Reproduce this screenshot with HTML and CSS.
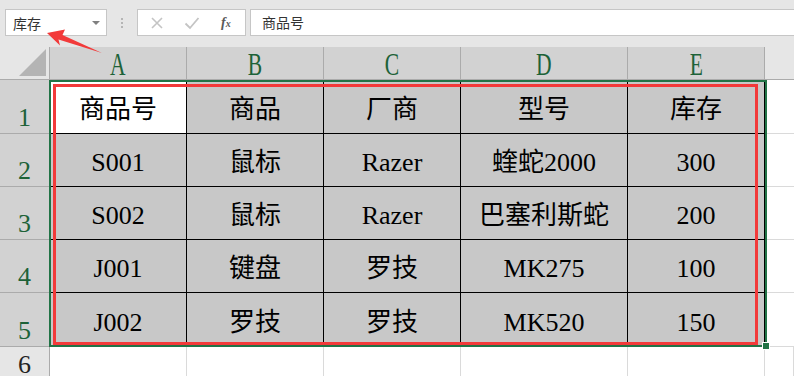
FILE: index.html
```html
<!DOCTYPE html>
<html lang="zh-CN">
<head>
	<meta charset="UTF-8">
	<title>库存表</title>
	<link rel="stylesheet" href="styles.css">
</head>
<body>

	<div class="toolbar">
		<div class="namebox">
			<span>库存</span>
			<span class="caret"></span>
		</div>
		<div class="grip"><i></i><i></i><i></i></div>
		<div class="tools">
			<svg class="tool" width="14" height="14" viewBox="0 0 14 14"><path d="M2 2 L12 12 M12 2 L2 12" stroke="#c4c4c4" stroke-width="1.6" fill="none"/></svg>
			<svg class="tool" width="16" height="14" viewBox="0 0 16 14"><path d="M1.5 7.5 L6 12 L14.5 2" stroke="#c4c4c4" stroke-width="1.8" fill="none"/></svg>
			<span class="fx">f<small>x</small></span>
		</div>
		<div class="formula">商品号</div>
	</div>

	<div class="sheet">
		<div class="grid">
			<div class="corner"><span class="tri"></span></div>
			<div class="colhead"><span>A</span></div>
			<div class="colhead"><span>B</span></div>
			<div class="colhead"><span>C</span></div>
			<div class="colhead"><span>D</span></div>
			<div class="colhead"><span>E</span></div>
			<div class="colhead blank"></div>

			<div class="rowhead">1</div>
			<div class="cell active">商品号</div>
			<div class="cell">商品</div>
			<div class="cell">厂商</div>
			<div class="cell">型号</div>
			<div class="cell">库存</div>
			<div class="empty"></div>

			<div class="rowhead">2</div>
			<div class="cell">S001</div>
			<div class="cell">鼠标</div>
			<div class="cell">Razer</div>
			<div class="cell">蝰蛇2000</div>
			<div class="cell">300</div>
			<div class="empty"></div>

			<div class="rowhead">3</div>
			<div class="cell">S002</div>
			<div class="cell">鼠标</div>
			<div class="cell">Razer</div>
			<div class="cell">巴塞利斯蛇</div>
			<div class="cell">200</div>
			<div class="empty"></div>

			<div class="rowhead">4</div>
			<div class="cell">J001</div>
			<div class="cell">键盘</div>
			<div class="cell">罗技</div>
			<div class="cell">MK275</div>
			<div class="cell">100</div>
			<div class="empty"></div>

			<div class="rowhead">5</div>
			<div class="cell">J002</div>
			<div class="cell">罗技</div>
			<div class="cell">罗技</div>
			<div class="cell">MK520</div>
			<div class="cell">150</div>
			<div class="empty"></div>

			<div class="rowhead plain">6</div>
			<div class="empty last"></div>
			<div class="empty last"></div>
			<div class="empty last"></div>
			<div class="empty last"></div>
			<div class="empty last"></div>
			<div class="empty last"></div>
		</div>

		<div class="selection"><span class="handle"></span></div>
		<div class="mark"></div>
	</div>

	<!-- annotation arrow pointing at the name box -->
	<svg class="arrow" width="110" height="60" viewBox="0 0 110 60">
		<polygon points="47,33 65,29.5 62.5,35 102,53 58.5,39.5 60,45.5" fill="#f23a3a"/>
	</svg>

</body>
</html>
```

FILE: styles.css
```css
*{
	box-sizing: border-box;
}
body{
	margin: 0;
	width: 794px;
	height: 376px;
	overflow: hidden;
	background: #fff;
	font-family: "Liberation Serif", "Noto Sans CJK SC", serif;
	position: relative;
}

/* ---- top bar ---- */
.toolbar{
	height: 47px;
	background: #e6e6e6;
	display: flex;
	align-items: flex-start;
	padding: 9px 0 0 5px;
}
.namebox{
	width: 102px;
	height: 27px;
	background: #fff;
	border: 1px solid #c6c6c6;
	display: flex;
	align-items: center;
	justify-content: space-between;
	padding: 0 6px 0 7px;
	font-family: "Noto Sans CJK SC", sans-serif;
	font-size: 14px;
	color: #333;
}
.caret{
	width: 0;
	height: 0;
	border-left: 4px solid transparent;
	border-right: 4px solid transparent;
	border-top: 4px solid #808080;
	margin-top: 1px;
}
.grip{
	width: 30px;
	height: 27px;
	display: flex;
	flex-direction: column;
	align-items: center;
	justify-content: center;
	gap: 2px;
}
.grip i{
	width: 2px;
	height: 2px;
	background: #b5b5b5;
}
.tools{
	width: 109px;
	height: 27px;
	background: #fff;
	border: 1px solid #c6c6c6;
	display: flex;
	align-items: center;
	padding-left: 12px;
	gap: 20px;
}
.fx{
	font-family: "Liberation Serif", serif;
	font-style: italic;
	font-weight: bold;
	font-size: 14px;
	color: #5a5a5a;
	margin-left: 1px;
}
.fx small{
	font-size: 10px;
}
.formula{
	flex: 1;
	height: 27px;
	margin-left: 4px;
	background: #fff;
	border: 1px solid #c6c6c6;
	border-right: none;
	padding-left: 11px;
	font-family: "Noto Sans CJK SC", sans-serif;
	font-size: 14px;
	line-height: 25px;
	color: #333;
}

/* ---- sheet ---- */
.sheet{
	position: relative;
}
.grid{
	display: grid;
	grid-template-columns: 50px 137px 137px 137px 167px 137px 1fr;
	grid-template-rows: 33px 54px 53px 53px 53px 54px 29px;
}
.corner{
	background: #e6e6e6;
	border-right: 1px solid #ababab;
	border-bottom: 1px solid #ababab;
	position: relative;
}
.tri{
	position: absolute;
	right: 3px;
	bottom: 3px;
	width: 0;
	height: 0;
	border-left: 27px solid transparent;
	border-bottom: 27px solid #b4b4b4;
}
.colhead{
	background: #d2d2d2;
	border-right: 1px solid #ababab;
	border-bottom: 1px solid #ababab;
	color: #1d6238;
	font-size: 27px;
	display: flex;
	align-items: center;
	justify-content: center;
	padding-top: 5px;
}
.colhead span{
	display: inline-block;
	transform: scale(0.8, 1.15);
}
.colhead.blank{
	background: #e6e6e6;
	border-right: none;
}
.rowhead{
	background: #d2d2d2;
	border-right: 1px solid #ababab;
	border-bottom: 1px solid #ababab;
	color: #1d6238;
	font-size: 26px;
	line-height: 26px;
	display: flex;
	align-items: flex-end;
	justify-content: center;
	padding-bottom: 2px;
}
.rowhead.plain{
	background: #e6e6e6;
	color: #222;
	border-bottom: none;
	padding-bottom: 0;
	align-items: flex-start;
	padding-top: 5px;
}
.cell{
	background: #c8c8c8;
	border-right: 1px solid #000;
	border-bottom: 1px solid #000;
	font-size: 26px;
	line-height: 26px;
	color: #000;
	display: flex;
	align-items: flex-end;
	justify-content: center;
	padding-bottom: 10px;
}
.cell.active{
	background: #fff;
}
.empty{
	background: #fff;
	border-bottom: 1px solid #dadada;
}
.empty.last{
	border-bottom: none;
	border-right: 1px solid #dadada;
}

/* selection and annotation overlays */
.selection{
	position: absolute;
	left: 49px;
	top: 33px;
	width: 718px;
	height: 267px;
	border: 2px solid #217346;
}
.handle{
	position: absolute;
	right: -4px;
	bottom: -4px;
	width: 6px;
	height: 6px;
	background: #217346;
	outline: 1px solid #fff;
}
.mark{
	position: absolute;
	left: 53px;
	top: 37px;
	width: 705px;
	height: 261px;
	border: 3px solid #f23a3a;
}
.arrow{
	position: absolute;
	left: 0;
	top: 0;
}
```
